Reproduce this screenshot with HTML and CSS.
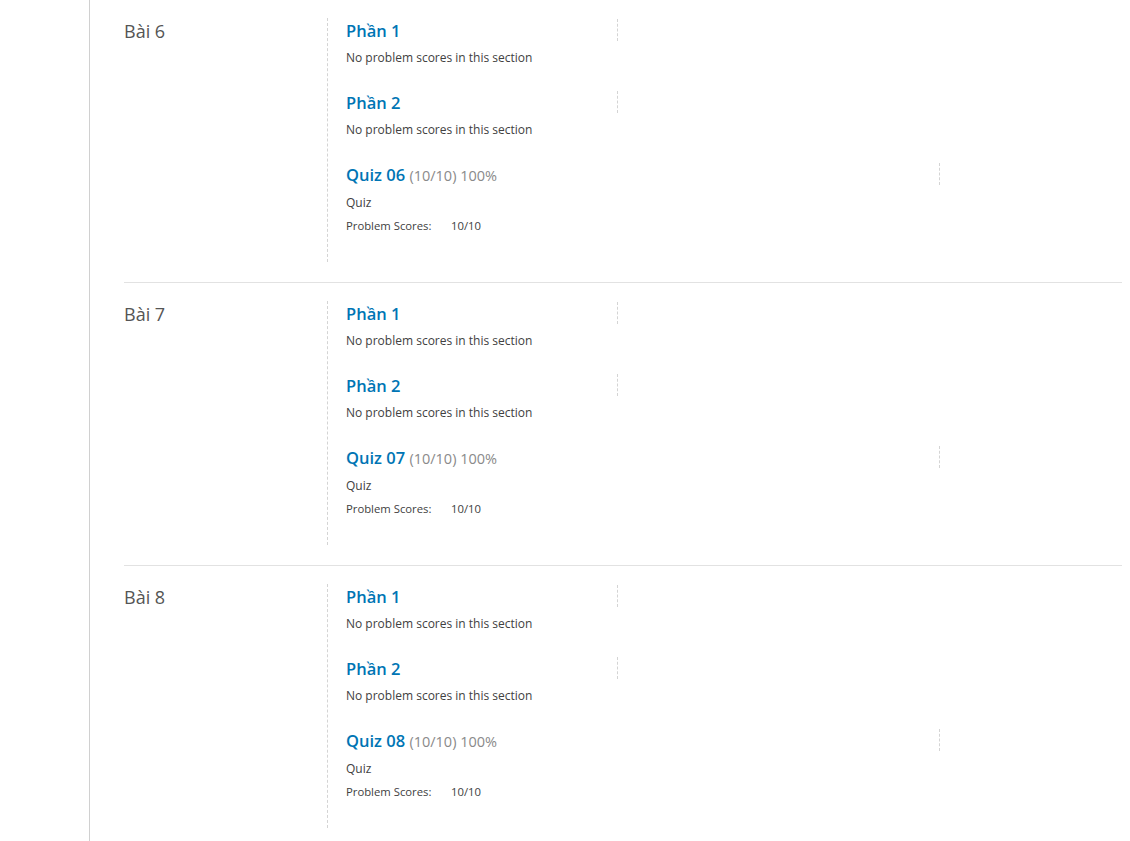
FILE: index.html
```html
<!DOCTYPE html>
<html lang="vi">
<head>
<meta charset="utf-8">
<title>Progress</title>
<link rel="stylesheet" href="styles.css">
</head>
<body>
<div class="page">
  <div class="content">
    <section class="chapter">
      <h2 class="chapter-name">Bài 6</h2>
      <div class="sections">
        <div class="sec">
          <div class="sec-head short"><h3 class="sec-title">Phần 1</h3></div>
          <p class="sec-note">No problem scores in this section</p>
        </div>
        <div class="sec">
          <div class="sec-head short"><h3 class="sec-title">Phần 2</h3></div>
          <p class="sec-note">No problem scores in this section</p>
        </div>
        <div class="sec quiz">
          <div class="sec-head long"><h3 class="sec-title">Quiz 06 <span class="score">(10/10) 100%</span></h3></div>
          <p class="sec-type">Quiz</p>
          <dl class="scores"><dt>Problem Scores:</dt><dd>10/10</dd></dl>
        </div>
      </div>
    </section>
    <section class="chapter">
      <h2 class="chapter-name">Bài 7</h2>
      <div class="sections">
        <div class="sec">
          <div class="sec-head short"><h3 class="sec-title">Phần 1</h3></div>
          <p class="sec-note">No problem scores in this section</p>
        </div>
        <div class="sec">
          <div class="sec-head short"><h3 class="sec-title">Phần 2</h3></div>
          <p class="sec-note">No problem scores in this section</p>
        </div>
        <div class="sec quiz">
          <div class="sec-head long"><h3 class="sec-title">Quiz 07 <span class="score">(10/10) 100%</span></h3></div>
          <p class="sec-type">Quiz</p>
          <dl class="scores"><dt>Problem Scores:</dt><dd>10/10</dd></dl>
        </div>
      </div>
    </section>
    <section class="chapter">
      <h2 class="chapter-name">Bài 8</h2>
      <div class="sections">
        <div class="sec">
          <div class="sec-head short"><h3 class="sec-title">Phần 1</h3></div>
          <p class="sec-note">No problem scores in this section</p>
        </div>
        <div class="sec">
          <div class="sec-head short"><h3 class="sec-title">Phần 2</h3></div>
          <p class="sec-note">No problem scores in this section</p>
        </div>
        <div class="sec quiz">
          <div class="sec-head long"><h3 class="sec-title">Quiz 08 <span class="score">(10/10) 100%</span></h3></div>
          <p class="sec-type">Quiz</p>
          <dl class="scores"><dt>Problem Scores:</dt><dd>10/10</dd></dl>
        </div>
      </div>
    </section>
  </div>
</div>
</body>
</html>
```
FILE: styles.css
```css
html, body {
  margin: 0;
  padding: 0;
  background: #fff;
}
body {
  font-family: "Open Sans", "Liberation Sans", sans-serif;
  color: #414141;
  height: 841px;
  overflow: hidden;
}
.page {
  padding-left: 89px;
  padding-right: 8px;
}
.content {
  border-left: 1px solid #d0d0d0;
  padding-left: 34px;
  min-height: 841px;
}
.chapter {
  display: grid;
  grid-template-columns: 203px 1fr;
  padding: 18px 0 20px;
  border-bottom: 1px solid #e2e2e2;
}
.chapter-name {
  margin: 0;
  padding-top: 1px;
  font-size: 18px;
  line-height: 25px;
  font-weight: 400;
  color: #555;
}
.sections {
  border-left: 1px dashed #d4d4d4;
  padding: 1px 0 0 18px;
  height: 243px;
}
.sec {
  padding-bottom: 25px;
}
.sec-head {
  height: 22px;
  border-right: 1px dashed #d4d4d4;
  display: flex;
  align-items: center;
  padding-top: 1px;
  box-sizing: border-box;
}
.sec-head.short { width: 272px; }
.sec-head.long { width: 594px; padding-top: 3px; }
.sec-title {
  margin: 0;
  font-size: 16.5px;
  line-height: 22px;
  font-weight: 600;
  color: #0075b4;
  white-space: nowrap;
}
.score {
  font-size: 14.5px;
  font-weight: 400;
  color: #8a8a8a;
}
.sec-note, .sec-type {
  margin: 8px 0 0;
  font-size: 12px;
  line-height: 18px;
}
.sec-note { margin-bottom: -1px; }
.sec-type { margin-top: 9px; }
.scores {
  margin: 5px 0 0;
  display: flex;
  font-size: 11.3px;
  line-height: 18px;
}
.scores dt { width: 105px; }
.scores dd { margin: 0; }
```
